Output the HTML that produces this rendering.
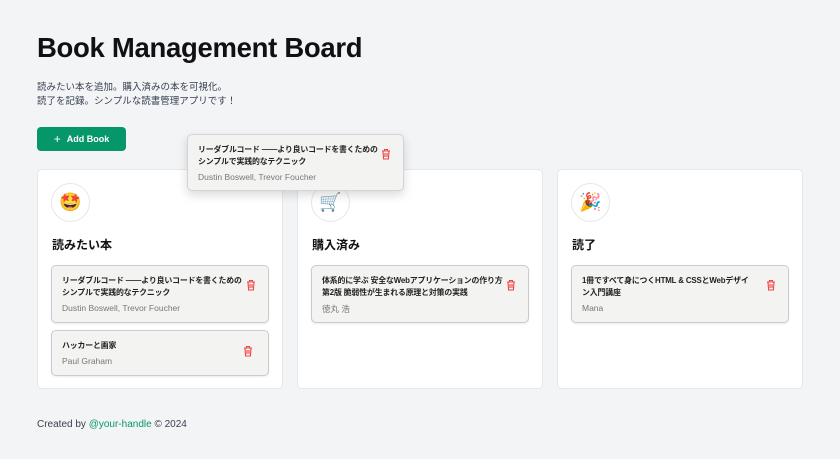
<!DOCTYPE html>
<html><head><meta charset="utf-8"><style>
*{box-sizing:border-box;margin:0;padding:0}
body{width:840px;height:459px;background:#f3f4f6;font-family:"Liberation Sans","Noto Sans CJK JP",sans-serif;color:#111;position:relative;overflow:hidden}
h1{position:absolute;left:37px;top:32px;font-size:27.5px;font-weight:700;letter-spacing:-0.3px}
.desc{position:absolute;left:37px;top:81px;font-size:9.5px;line-height:14px;color:#374151}
.btn{position:absolute;left:37px;top:127px;width:89px;height:24px;background:#059669;border-radius:4px;color:#fff;font-size:9px;font-weight:700;display:flex;align-items:center;justify-content:center;gap:6px}
.col{position:absolute;top:169px;width:246px;height:220px;background:#fff;border:1px solid #e5e7eb;border-radius:5px}
.icon{position:absolute;left:13px;top:13px;width:39px;height:39px;border:1px solid #e5e7eb;border-radius:50%;display:flex;align-items:center;justify-content:center;font-size:18px}
.col h2{position:absolute;left:14px;top:66px;font-size:12px;font-weight:700}
.card{position:absolute;left:13px;width:218px;background:#f3f3f2;border:1px solid #c9cbd0;border-radius:5px;box-shadow:0 1px 2px rgba(0,0,0,.08);padding:9px 0 0 10px}
.t{font-size:7.9px;font-weight:700;line-height:12px;color:#222;white-space:nowrap;letter-spacing:-0.15px}
.a{font-size:8.5px;color:#777;margin-top:4px}
.tr{position:absolute;right:12px;top:13px}
.foot{position:absolute;left:37px;top:419px;font-size:10px;color:#374151}
.foot span{color:#059669}
</style></head><body>
<h1>Book Management Board</h1>
<div class="desc">読みたい本を追加。購入済みの本を可視化。<br>読了を記録。シンプルな読書管理アプリです！</div>
<div class="btn"><span style="font-size:12px;font-weight:400">+</span>Add Book</div>
<svg width="0" height="0" style="position:absolute"><symbol id="tr" viewBox="0 0 10 12"><path d="M1 3h8M3.5 3V1.5h3V3M2 3l.6 8h4.8L8 3M4 5v4M6 5v4" fill="none" stroke="#ef4444" stroke-width="1.1"/></symbol></svg>
<div class="col" style="left:37px">
<div class="icon">🤩</div><h2>読みたい本</h2>
<div class="card" style="top:95px;height:58px"><div class="t">リーダブルコード ――より良いコードを書くための<br>シンプルで実践的なテクニック</div><div class="a">Dustin Boswell, Trevor Foucher</div><svg class="tr" width="10" height="12"><use href="#tr"/></svg></div>
<div class="card" style="top:160px;height:46px"><div class="t">ハッカーと画家</div><div class="a">Paul Graham</div><svg class="tr" width="10" height="12" style="top:14px;right:15px"><use href="#tr"/></svg></div>
</div>
<div class="col" style="left:297px">
<div class="icon">🛒</div><h2>購入済み</h2>
<div class="card" style="top:95px;height:58px"><div class="t">体系的に学ぶ 安全なWebアプリケーションの作り方<br>第2版 脆弱性が生まれる原理と対策の実践</div><div class="a">徳丸 浩</div><svg class="tr" width="10" height="12"><use href="#tr"/></svg></div>
</div>
<div class="col" style="left:557px">
<div class="icon">🎉</div><h2>読了</h2>
<div class="card" style="top:95px;height:58px"><div class="t">1冊ですべて身につくHTML &amp; CSSとWebデザイ<br>ン入門講座</div><div class="a">Mana</div><svg class="tr" width="10" height="12"><use href="#tr"/></svg></div>
</div>
<div class="card" style="left:187px;top:134px;width:217px;height:57px;box-shadow:0 4px 10px rgba(0,0,0,.15);border-color:#d1d5db"><div class="t">リーダブルコード ――より良いコードを書くための<br>シンプルで実践的なテクニック</div><div class="a">Dustin Boswell, Trevor Foucher</div><svg class="tr" width="10" height="12"><use href="#tr"/></svg></div>
<div class="foot">Created by <span>@your-handle</span> © 2024</div>
</body></html>
